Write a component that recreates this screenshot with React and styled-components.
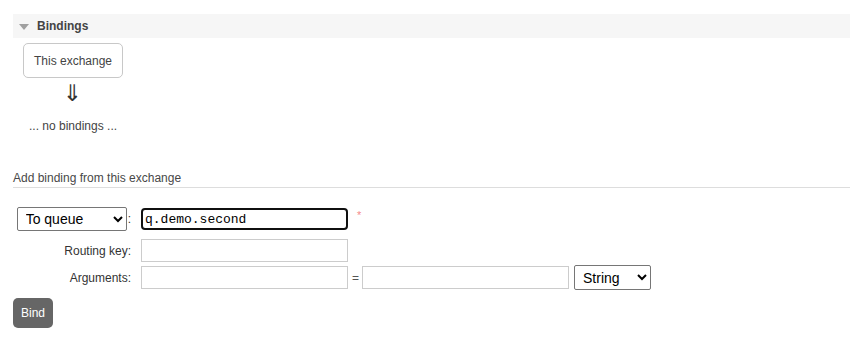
import React from "react";
import styled, { createGlobalStyle } from "styled-components";

const Global = createGlobalStyle`
  html, body { margin: 0; padding: 0; background: #fff; }
  body {
    font-family: "Liberation Sans", Arial, sans-serif;
    font-size: 12px;
    color: #484848;
  }
`;

const Page = styled.div`
  padding: 14px 0 0 13px;
`;

const SectionHeader = styled.div`
  display: flex;
  align-items: center;
  height: 24px;
  background: #f6f6f6;
  font-weight: bold;
  color: #444;
  font-size: 12px;
`;

const Triangle = styled.span`
  width: 0;
  height: 0;
  margin: 1px 8px 0 6px;
  border-left: 5.5px solid transparent;
  border-right: 5.5px solid transparent;
  border-top: 6px solid #a0a0a0;
`;

const Diagram = styled.div`
  padding-left: 10px;
`;

const ExchangeBox = styled.div`
  margin-top: 5px;
  width: 98px;
  height: 33px;
  border: 1px solid #c8c8c8;
  border-radius: 5px;
  display: flex;
  align-items: center;
  justify-content: center;
  color: #444;
  background: #fff;
`;

const Arrow = styled.div`
  width: 99px;
  text-align: center;
  font-size: 23px;
  line-height: 24px;
  height: 22px;
  margin-top: 3px;
  color: #333;
  font-family: "DejaVu Sans", sans-serif;
`;

const NoBindings = styled.div`
  margin-top: 16px;
  padding-left: 6px;
  color: #444;
`;

const SubHeading = styled.h3`
  margin: 38px 0 0 0;
  font-size: 12px;
  font-weight: normal;
  color: #484848;
  padding-bottom: 2px;
  border-bottom: 1px solid #ddd;
`;

const Form = styled.div`
  margin-top: 19px;
  display: flex;
  flex-direction: column;
`;

const Row = styled.div`
  display: flex;
  align-items: center;
  margin-top: ${(p) => p.$gap || 0}px;
`;

const Label = styled.div`
  width: 118px;
  text-align: right;
  display: flex;
  align-items: center;
  justify-content: flex-end;
  color: #333;
  margin-right: 10px;
`;

const Select = styled.select`
  font-family: "Liberation Sans", Arial, sans-serif;
  font-size: 14px;
  width: ${(p) => p.$w}px;
  height: ${(p) => p.$h || 24}px;
  border: 1px solid #767676;
  border-radius: 2px;
  background: #fff;
  color: #000;
  padding: 0 2px 0 4px;
  margin: 0;
`;

const Colon = styled.span`
  margin-left: 1px;
`;

const TextInput = styled.input`
  box-sizing: border-box;
  width: 207px;
  height: 23px;
  border: 1px solid #ccc;
  margin: 0;
  padding: 2px 4px;
  background: #fff;
  font-family: "Liberation Sans", Arial, sans-serif;
  font-size: 12px;
  outline: none;
`;

const FocusedInput = styled(TextInput)`
  height: 22px;
  border: 2px solid #101010;
  border-radius: 4px;
  padding: 0 2px;
  font-family: "Liberation Mono", monospace;
  font-size: 13px;
  color: #000;
  caret-color: #000;
`;

const Mandatory = styled.span`
  color: #f58a8a;
  margin-left: 9px;
  font-size: 11px;
  align-self: flex-start;
  margin-top: 2px;
`;

const Equals = styled.span`
  margin: 0 3px 0 4px;
  color: #555;
`;

const TypeSelect = styled(Select)`
  margin-left: 5px;
`;

const BindButton = styled.button`
  margin-top: 8px;
  width: 40px;
  height: 30px;
  border: none;
  border-radius: 5px;
  background: #666;
  color: #fff;
  font-family: "Liberation Sans", Arial, sans-serif;
  font-size: 12px;
  padding: 0;
`;

export default function App() {
  return (
    <>
      <Global />
      <Page>
        <SectionHeader>
          <Triangle />
          Bindings
        </SectionHeader>
        <Diagram>
          <ExchangeBox>This exchange</ExchangeBox>
          <Arrow>⇓</Arrow>
          <NoBindings>... no bindings ...</NoBindings>
        </Diagram>
        <SubHeading>Add binding from this exchange</SubHeading>
        <Form>
          <Row>
            <Label>
              <Select $w={110} $h={24} defaultValue="queue">
                <option value="queue">To queue</option>
                <option value="exchange">To exchange</option>
              </Select>
              <Colon>:</Colon>
            </Label>
            <FocusedInput defaultValue="q.demo.second" />
            <Mandatory>*</Mandatory>
          </Row>
          <Row $gap={8}>
            <Label>Routing key:</Label>
            <TextInput />
          </Row>
          <Row $gap={3}>
            <Label>Arguments:</Label>
            <TextInput />
            <Equals>=</Equals>
            <TextInput />
            <TypeSelect $w={77} $h={25} defaultValue="string">
              <option value="string">String</option>
              <option value="number">Number</option>
              <option value="boolean">Boolean</option>
            </TypeSelect>
          </Row>
          <div>
            <BindButton>Bind</BindButton>
          </div>
        </Form>
      </Page>
    </>
  );
}
